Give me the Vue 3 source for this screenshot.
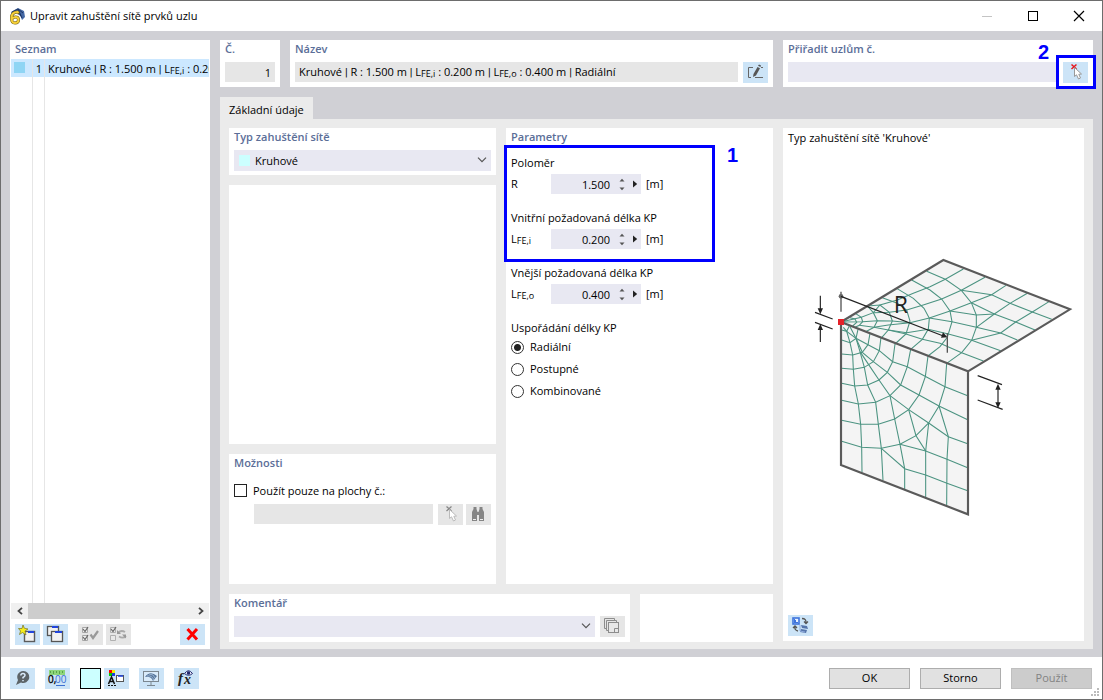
<script setup>
import { ref } from 'vue'

const arrangement = ref('radial')
const onlySurfaces = ref(false)
const refinement = ref('Kruhové')
const comment = ref('')
const nodes = ref('')

const lengths = ref([
  { id: 'r', label: 'Poloměr', sym: 'R', sub: '', value: '1.500' },
  { id: 'lfei', label: 'Vnitřní požadovaná délka KP', sym: 'L', sub: 'FE,i', value: '0.200' },
  { id: 'lfeo', label: 'Vnější požadovaná délka KP', sym: 'L', sub: 'FE,o', value: '0.400' },
])

const arrangements = [
  { id: 'radial', label: 'Radiální' },
  { id: 'gradual', label: 'Postupné' },
  { id: 'combined', label: 'Kombinované' },
]

const topMesh = [
  '150,203 165,207 170,217 158,228',
  '166,190 184,202 188,215 178,226 165,232',
  '202,168 220,188 232,212 222,232 197,245',
  '202,168 240,165 268,187 277,213 265,240 245,263',
  '247,143 292,160 320,180 330,213 318,252 285,282',
  '290,115 340,145 372,175 388,205 385,237 367,268 332,298',
  '335,90 390,120 425,147 450,183 456,215 442,262 420,290 384,318',
  '380,64 436,88 484,121 514,158 529,195 529,232 515,271 485,308 440,340',
  '123,216 184,202 220,188 240,165 292,150 340,130 390,110 436,88 490,57',
  '220,188 268,187 320,180 372,164 425,147 484,121 555,82',
  '123,216 188,215 232,212 277,213 330,218 388,204 450,183 514,158 575,134 618,106',
  '388,204 456,215 529,232 602,249 652,270',
  '178,226 222,232 265,225 330,218',
  '222,232 265,240 320,248 385,238 445,252 515,271 602,302',
  '265,240 318,252 367,268 420,280 485,308 550,333',
  '484,121 575,134 630,160 697,186 755,208',
  '514,158 583,192 647,216 705,240',
  '450,183 529,195 583,192',
  '529,232 583,192 630,160 682,130',
  '515,271 602,249 647,216 697,186 747,155',
]

const frontMesh = [
  '125,240 140,244 148,228',
  '125,270 150,278 168,265 174,238',
  '125,312 158,315 187,307 204,284 210,250',
  '125,355 160,358 193,352 220,335 238,302 243,262',
  '125,400 164,408 203,405 237,390 262,367 278,335 285,282',
  '125,451 175,462 227,457 270,437 302,405 322,350 332,298',
  '125,511 182,523 235,523 284,507 326,479 357,435 376,380 384,318',
  '125,574 185,592 244,595 300,583 348,557 386,519 417,468 435,410 440,340',
  '130,232 140,244 150,278 158,315 160,358 164,408 175,462 182,523 185,592 186,667',
  '140,244 168,265 180,305 193,352 203,405 227,457 235,523 244,595 249,691',
  '180,305 210,350 237,390 270,437 284,507 300,583 314,656 314,717',
  '168,265 187,307 220,335 262,367 302,405 357,435 417,468 503,509',
  '150,230 168,265 204,284 238,302 278,335 322,350 378,380 435,410 503,437',
  '270,437 326,479 386,519 445,560 503,581',
  '326,479 348,557 377,603 377,742',
  '386,519 377,603',
  '417,468 445,560 441,628 440,766',
  '300,583 377,603 441,628 503,653',
  '244,595 314,656 377,675 441,700 503,722',
]
</script>

<template>
  <main class="window">
    <header class="titlebar">
      <svg class="app-icon" width="17" height="17" viewBox="0 0 17 17" aria-hidden="true">
        <path d="M2 4L9 0L15 3L16 9L13 12L11 7L8 5L3 7Z" fill="#4468a5" />
        <path d="M3 4L9 1L14 5M6 3L12 8M9 1L13 10" stroke="#1d3564" fill="none" />
        <path d="M10 5.500L8.500 4Q2.500 4 2.500 10Q2.500 15 6 15Q9.500 15 9.500 11.800Q9.500 9 6.500 9Q4 9 3 11" stroke="#6b5a10" stroke-width="3" fill="none" />
        <path d="M9.500 5L8.500 4Q2.500 4 2.500 10Q2.500 15 6 15Q9.500 15 9.500 11.800Q9.500 9 6.500 9Q4 9 3 11" stroke="#f5cf38" stroke-width="2" fill="none" />
      </svg>
      <h1>Upravit zahuštění sítě prvků uzlu</h1>
      <div class="window-controls">
        <button aria-label="Minimalizovat" disabled><svg width="12" height="12" viewBox="0 0 12 12"><path d="M1 6.500H11" stroke="#c4c4c4" /></svg></button>
        <button aria-label="Maximalizovat"><svg width="12" height="12" viewBox="0 0 12 12"><rect x="1.500" y="1.500" width="9" height="9" fill="none" stroke="#000" /></svg></button>
        <button aria-label="Zavřít"><svg width="12" height="12" viewBox="0 0 12 12"><path d="M1 1L11 11M11 1L1 11" stroke="#000" stroke-width="1.200" /></svg></button>
      </div>
    </header>

    <div class="body">
      <section class="panel list-panel">
        <h2>Seznam</h2>
        <ul class="list" role="listbox" aria-label="Seznam">
          <li class="item" role="option" aria-selected="true">
            <span class="cell-color"><i class="swatch"></i></span>
            <span class="cell-no">1</span>
            <span class="cell-name">Kruhové <i class="bar">|</i> R : 1.500 m <i class="bar">|</i> L<sub>FE,i</sub> : 0.200</span>
          </li>
          <li class="rest" role="presentation"><span class="cell-color"></span><span class="cell-no"></span></li>
        </ul>
        <div class="scrollbar">
          <button aria-label="Posunout vlevo"><svg width="8" height="8" viewBox="0 0 8 8"><path d="M6 .8L2.500 4L6 7.200" fill="none" stroke="#444" stroke-width="1.800" /></svg></button>
          <div class="track"><div class="thumb"></div></div>
          <button aria-label="Posunout vpravo"><svg width="8" height="8" viewBox="0 0 8 8"><path d="M2 .8L5.500 4L2 7.200" fill="none" stroke="#444" stroke-width="1.800" /></svg></button>
        </div>
        <div class="list-tools">
          <button class="tool" aria-label="Nový">
            <svg width="25" height="21" viewBox="0 0 25 21">
              <rect x="9.500" y="7.500" width="10" height="10" fill="#f2f2f2" stroke="#5b5b5b" stroke-width="1.400" /><path d="M13 8H19" stroke="#2346dd" stroke-width="2" />
              <path d="M8 1L9.300 4.200L13 5L10 7L11 11L7.500 8.500L4.500 10.500L5.500 7L3.500 4.500L7 4.500Z" fill="#f6ee1c" stroke="#77731f" stroke-width=".7" />
            </svg>
          </button>
          <button class="tool" aria-label="Kopírovat">
            <svg width="25" height="21" viewBox="0 0 25 21">
              <rect x="4.500" y="2.500" width="11" height="9" fill="#f2f2f2" stroke="#555" stroke-width="1.300" /><path d="M9 3H15" stroke="#2346dd" stroke-width="2" />
              <rect x="8.500" y="7.500" width="11" height="10" fill="#f2f2f2" stroke="#555" stroke-width="1.300" /><path d="M12 8H19" stroke="#2346dd" stroke-width="2" />
            </svg>
          </button>
          <button class="tool off gap" aria-label="Vybrat vše" disabled>
            <svg width="25" height="21" viewBox="0 0 25 21">
              <path d="M4.500 3.500H9.500V8.500H4.500ZM4.500 11.500H9.500V16.500H4.500Z" fill="#eee" stroke="#a8a8a8" />
              <path d="M5 5L7 7.500L10 3M5 13L7 15.500L10 11" fill="none" stroke="#666" stroke-width="1.200" /><path d="M12.500 10.500L15 14L20 7" fill="none" stroke="#999" stroke-width="2.200" />
            </svg>
          </button>
          <button class="tool off" aria-label="Obrátit výběr" disabled>
            <svg width="25" height="21" viewBox="0 0 25 21">
              <path d="M4.500 3.500H9.500V8.500H4.500ZM4.500 11.500H9.500V16.500H4.500Z" fill="#e9e9e9" stroke="#b0b0b0" />
              <path d="M5 5L7 7.500L10 3" fill="none" stroke="#666" stroke-width="1.200" /><path d="M12 9Q15 5.500 19 8M20 12Q17 15 13 12.500" fill="none" stroke="#aaa" stroke-width="1.800" /><path d="M11 6V10H15ZM20 14.500V10.500H16Z" fill="#999" />
            </svg>
          </button>
          <button class="tool right" aria-label="Smazat">
            <svg width="25" height="21" viewBox="0 0 25 21"><path d="M7.500 5L17 15.500M17 5L7.500 15.500" stroke="#f00" stroke-width="3" /></svg>
          </button>
        </div>
      </section>

      <div class="main">
        <div class="top">
          <section class="panel">
            <h2>Č.</h2>
            <output class="field gray number">1</output>
          </section>
          <section class="panel">
            <h2>Název</h2>
            <div class="line">
              <output class="field gray grow">Kruhové <i class="bar">|</i> R : 1.500 m <i class="bar">|</i> L<sub>FE,i</sub> : 0.200 m <i class="bar">|</i> L<sub>FE,o</sub> : 0.400 m <i class="bar">|</i> Radiální</output>
              <button class="tool" aria-label="Upravit název">
                <svg width="25" height="21" viewBox="0 0 25 21"><path d="M10 5.500H5.500V15.500H8M12 15.500H20M18 5.500H20" fill="none" stroke="#666" /><path d="M14.500 5L17 6.200L13 13.500L10 15L10.500 12Z" fill="#555" /><path d="M15 3.800L16 2.500L18 3.500L17.500 5Z" fill="#555" /></svg>
              </button>
            </div>
          </section>
          <section class="panel">
            <h2><label for="nodes">Přiřadit uzlům č.</label></h2>
            <div class="line">
              <input id="nodes" v-model="nodes" class="field grow" type="text" />
              <div class="marked">
                <button class="tool" aria-label="Vybrat uzly">
                  <svg width="25" height="21" viewBox="0 0 25 21"><path d="M8.500 2.500L13.500 7M13.500 2.500L8.500 7" stroke="#e8161b" stroke-width="1.500" /><path d="M11.500 5.500V14.500L13.500 12.800L15.500 17L17.500 16L15.800 12.300L18.500 12Z" fill="#fff" stroke="#999" /></svg>
                </button>
                <div class="mark mark-two"></div>
                <b class="mark-label label-two">2</b>
              </div>
            </div>
          </section>
        </div>

        <nav class="tabs"><button class="tab">Základní údaje</button></nav>

        <div class="page">
          <div class="column">
            <section class="panel">
              <h2><label for="kind">Typ zahuštění sítě</label></h2>
              <div class="select">
                <i class="kind-swatch"></i>
                <select id="kind" v-model="refinement" class="with-swatch"><option>Kruhové</option></select>
                <svg class="chevron" width="10" height="6" viewBox="0 0 10 6"><path d="M1 .7L5 4.700L9 .7" fill="none" stroke="#555" stroke-width="1.200" /></svg>
              </div>
            </section>
            <section class="panel blank"></section>
            <section class="panel options">
              <h2>Možnosti</h2>
              <label class="check"><input v-model="onlySurfaces" type="checkbox" />Použít pouze na plochy č.:</label>
              <div class="line surfaces">
                <input class="field gray grow" type="text" aria-label="Plochy č." disabled />
                <div class="pair">
                  <button class="tool off" aria-label="Vybrat plochy" disabled>
                    <svg width="25" height="21" viewBox="0 0 25 21"><path d="M8.500 2.500L13.500 7M13.500 2.500L8.500 7" stroke="#888" stroke-width="1.300" /><path d="M11.500 5.500V14.500L13.500 12.800L15.500 17L17.500 16L15.800 12.300L18.500 12Z" fill="#fff" stroke="#bbb" /></svg>
                  </button>
                  <button class="tool off" aria-label="Najít plochy" disabled>
                    <svg width="25" height="21" viewBox="0 0 25 21"><path d="M6 15V8L7.500 5V3H10.500V5L11.500 8H12.500L13.500 5V3H16.500V5L18 8V15H13V11H11V15Z" fill="#858585" /><path d="M6 14.500H11V17H6ZM13 14.500H18V17H13Z" fill="#858585" /><path d="M7 15.500H10M14 15.500H17" stroke="#eee" /></svg>
                  </button>
                </div>
              </div>
            </section>
          </div>

          <section class="panel params">
            <h2>Parametry</h2>
            <div class="param-groups">
              <div v-for="p in lengths" :key="p.id" class="param">
                <div class="caption">{{ p.label }}</div>
                <div class="param-line">
                  <label :for="p.id">{{ p.sym }}<sub v-if="p.sub">{{ p.sub }}</sub></label>
                  <div class="spin">
                    <input :id="p.id" v-model="p.value" type="text" />
                    <div class="steps">
                      <button aria-label="Zvýšit"><svg width="6" height="4" viewBox="0 0 6 4"><path d="M.5 3.500L3 .7L5.500 3.500Z" fill="#555" /></svg></button>
                      <button aria-label="Snížit"><svg width="6" height="4" viewBox="0 0 6 4"><path d="M.5 .5L3 3.300L5.500 .5Z" fill="#555" /></svg></button>
                    </div>
                    <button class="more" aria-label="Další možnosti"><svg width="5" height="8" viewBox="0 0 5 8"><path d="M0 .5L4.200 4L0 7.500Z" fill="#222" /></svg></button>
                  </div>
                  <span>[m]</span>
                </div>
              </div>
            </div>
            <fieldset>
              <legend>Uspořádání délky KP</legend>
              <label v-for="a in arrangements" :key="a.id" class="radio"><input v-model="arrangement" type="radio" name="arrangement" :value="a.id" />{{ a.label }}</label>
            </fieldset>
            <div class="mark mark-one"></div>
            <b class="mark-label label-one">1</b>
          </section>

          <section class="panel preview">
            <p>Typ zahuštění sítě 'Kruhové'</p>
            <div class="drawing">
              <svg width="283" height="279" viewBox="-24 -27 849 837" role="img" aria-label="Kruhové zahuštění sítě">
                <path d="M123 216L430 30L810 178L504 364Z" fill="#f4f4f4" />
                <path d="M123 216L504 364V793L123 645Z" fill="#f4f4f4" />
                <g fill="none" stroke="#4b9381" stroke-width="3.200">
                  <polyline v-for="(m, i) in topMesh" :key="'t' + i" :points="m" />
                  <polyline v-for="(m, i) in frontMesh" :key="'f' + i" :points="m" />
                </g>
                <path d="M123 216L430 30L810 178L504 364ZM123 216V645L504 793V364" fill="none" stroke="#5a5a5a" stroke-width="6.500" />
                <rect x="114" y="207" width="18" height="18" fill="#e52129" />
                <path d="M123 125V185M442 250V308" stroke="#555" stroke-width="4" />
                <circle cx="123" cy="139" r="7" fill="#666" />
                <g stroke="#222" stroke-width="3.500" fill="none">
                  <path d="M123 139L430 258M45 187L98 207M45 217L98 237M61 137V180M61 276V230M533 377L606 404M533 450L608 478M594 410V467" />
                </g>
                <path d="M442 262L423 263L429 247ZM61 193L53 175H69ZM61 222L53 240H69ZM594 401L586 419H602ZM594 475L586 457H602Z" fill="#222" />
                <text x="281" y="190" font-size="69" fill="#222">R</text>
              </svg>
            </div>
            <button class="tool" aria-label="Přepnout náhled">
              <svg width="25" height="21" viewBox="0 0 25 21"><rect x="5" y="3" width="6" height="6" fill="#e7f0ff" stroke="#3d73dc" stroke-width="1.600" /><path d="M6 4V8H10V7H8V5H7V4Z" fill="#3d73dc" /><path d="M14 3.500Q18.500 3.500 18 8M16 6.500L18 8.500L20 6.500M7 11Q6 15 10 16M5 13L7 11L9 13" fill="none" stroke="#555" stroke-width="1.300" /><path d="M13 10L19 11L20 14L14 13ZM13 14L19 15L18 18L12 17Z" fill="#5575ab" /><path d="M12 10V16L17 17" stroke="#8eaadc" fill="none" /></svg>
            </button>
          </section>

          <div class="comment-row">
            <section class="panel">
              <h2><label for="comment">Komentář</label></h2>
              <div class="line">
                <div class="select grow">
                  <select id="comment" v-model="comment"><option></option></select>
                  <svg class="chevron" width="10" height="6" viewBox="0 0 10 6"><path d="M1 .7L5 4.700L9 .7" fill="none" stroke="#555" stroke-width="1.200" /></svg>
                </div>
                <button class="tool off" aria-label="Uložené komentáře" disabled>
                  <svg width="25" height="21" viewBox="0 0 25 21"><path d="M4.500 12.500V2.500H14.500V4M6.500 14.500V4.500H16.500V6" fill="none" stroke="#8d8d8d" /><path d="M4.500 12.500H6M6.500 14.500H8" stroke="#8d8d8d" /><rect x="8.500" y="6.500" width="10" height="10" fill="#e8e8e8" stroke="#8d8d8d" /><path d="M14.500 16V12.500H18" fill="none" stroke="#8d8d8d" /></svg>
                </button>
              </div>
            </section>
            <section class="panel"></section>
          </div>
        </div>
      </div>
    </div>

    <footer>
      <div class="foot-tools">
        <button class="tool" aria-label="Nápověda">
          <svg width="25" height="21" viewBox="0 0 25 21"><path d="M13 3A6 6 0 1 1 11 14.500L6 17L8 12A6 6 0 0 1 13 3Z" fill="#5d6468" /><path d="M10.800 7.500Q11 5.500 13 5.500Q15 5.500 15 7.300Q15 8.500 13 9.500V10.500M13 12V13.300" fill="none" stroke="#d9eafa" stroke-width="1.500" /></svg>
        </button>
        <button class="tool" aria-label="Jednotky a desetinná místa">
          <svg width="25" height="21" viewBox="0 0 25 21"><rect x="4" y="2" width="16" height="5" fill="#8ed67b" /><path d="M5.500 3V5M8.500 3V6M11.500 3V5M14.500 3V6M17.500 3V5" stroke="#5aa34b" /><text x="3" y="15" font-size="10" fill="#000" stroke="#000" stroke-width=".3">0,</text><text x="10" y="15" font-size="10" fill="#3a6fd2">00</text><path d="M11 17.500H20" stroke="#3a6fd2" /></svg>
        </button>
        <button class="color-button" aria-label="Barva"></button>
        <button class="tool tight" aria-label="Zobrazení">
          <svg width="25" height="21" viewBox="0 0 25 21"><path d="M5 2H8V5H5Z" fill="#f00" /><path d="M8 2H11V5H8Z" fill="#eded00" /><path d="M5 5H8V8H5Z" fill="#00ca00" /><path d="M8 5H11V8H8Z" fill="#1a3ce0" /><path d="M4.500 16L7.500 9L10.500 16M6 13.500H9" fill="none" stroke="#111" stroke-width="1.500" /><path d="M4 17.500H12" stroke="#111" stroke-dasharray="2 1" /><rect x="12.500" y="7.500" width="7" height="6" fill="#fff" stroke="#555" /><path d="M14 8H19" stroke="#2346dd" stroke-width="1.600" /></svg>
        </button>
        <button class="tool" aria-label="Náhled">
          <svg width="25" height="21" viewBox="0 0 25 21"><rect x="4.500" y="3.500" width="15" height="10" fill="#d9ebfa" stroke="#7b8790" /><path d="M12 14V17M8 17.500H16" stroke="#7b8790" /><path d="M6 9Q11 2 18 8L14 13Q12 8 6 9Z" fill="#56779d" /><path d="M8 8Q13 7 15 12M10 6Q15 6 16 10" stroke="#9bb3cf" fill="none" /></svg>
        </button>
        <button class="tool" aria-label="Vzorce">
          <svg width="25" height="21" viewBox="0 0 25 21"><text class="formula" x="4" y="15" font-size="15" fill="#222">f</text><text class="formula" x="10" y="16" font-size="14" fill="#222">x</text><path d="M10.500 5.500Q14.500 0 18.500 5.500Q14.500 9 10.500 5.500Z" fill="#e5eafb" stroke="#22266b" /><circle cx="14.500" cy="5" r="1.700" fill="#22266b" /></svg>
        </button>
      </div>
      <div class="actions">
        <button>OK</button>
        <button>Storno</button>
        <button disabled>Použít</button>
      </div>
      <svg class="grip" width="9" height="9" viewBox="0 0 9 9" aria-hidden="true"><path d="M6 0H8V2H6ZM3 3H5V5H3ZM6 3H8V5H6ZM0 6H2V8H0ZM3 6H5V8H3ZM6 6H8V8H6Z" fill="#bbb" /></svg>
    </footer>
  </main>
</template>

<style>
body { background: #fff; }
</style>

<style scoped>
* { box-sizing: border-box; }
.window {
  min-height: 100vh; display: flex; flex-direction: column; border: 1px solid #6d6d6d; background: #fff;
  font-family: "Open Sans", "Noto Sans", sans-serif; font-size: 11px; line-height: 16px; color: #000;
}
button, input, select { font: inherit; color: inherit; margin: 0; padding: 0; border: 0; border-radius: 0; background: none; }
svg { display: block; }
h1, h2, p, ul, fieldset { margin: 0; padding: 0; border: 0; }
sub { font-size: 9px; line-height: 1; vertical-align: -1px; }
.bar { font-family: Roboto, sans-serif; font-style: normal; }

.titlebar { height: 30px; display: flex; align-items: center; padding-left: 8px; gap: 4px; }
h1 { font-size: 11px; font-weight: 400; flex: 1; }
.window-controls { display: flex; }
.window-controls button { width: 46px; height: 30px; display: grid; place-items: center; }

.body { flex: 1; display: flex; gap: 10px; padding: 9px 9px 8px; background: #d0d0d5; }
.panel { background: #fff; padding: 1px 5px 5px; min-width: 0; }
h2 { font-size: 11px; font-weight: 600; color: #5b6e98; line-height: 16px; margin-bottom: 5px; }

.list-panel { width: 200px; display: flex; flex-direction: column; padding: 1px 1px 4px; }
.list-panel h2 { padding-left: 4px; margin-bottom: 2px; }
.list { flex: 1; list-style: none; display: flex; flex-direction: column; }
.item, .rest { display: flex; overflow: hidden; }
.item { height: 18px; line-height: 19px; background: #cce8ff; white-space: nowrap; }
.rest { flex: 1; }
.cell-color { width: 22px; padding: 3px; border-right: 1px solid #e6e6e6; flex: none; }
.cell-no { width: 12px; border-right: 1px solid #e6e6e6; text-align: right; padding-right: 2px; flex: none; }
.cell-name { padding-left: 3px; overflow: hidden; }
.swatch { display: block; width: 11px; height: 11px; background: #8fd5f4; }
.scrollbar { height: 16px; display: flex; background: #f0f0f0; }
.scrollbar button { width: 17px; display: grid; place-items: center; }
.track { flex: 1; }
.thumb { width: 56%; height: 100%; background: #cdcdcd; }
.list-tools { display: flex; gap: 3px; padding: 5px 4px 0; }
.tool { width: 25px; height: 21px; background: #cce4f7; flex: none; }
.tool.off { background: #e6e6e6; }
.gap { margin-left: 7px; }
.right { margin-left: auto; }

.main { flex: 1; min-width: 0; display: flex; flex-direction: column; }
.top { display: grid; grid-template-columns: 60px 1fr 310px; gap: 10px; }
.line { display: flex; gap: 5px; }
.field { display: block; height: 20px; line-height: 20px; padding: 0 4px; background: #e8e8f2; min-width: 0; white-space: nowrap; overflow: hidden; }
.gray { background: #e6e6e6; }
.grow { flex: 1; }
.number { text-align: right; line-height: 22px; }
.top .panel { height: 47px; }

.tabs { display: flex; margin-top: 10px; }
.tab { height: 22px; padding: 4px 9px 0; background: #ebebeb; }
.page {
  flex: 1; display: grid; grid-template-columns: 1fr 1fr 301px; grid-template-rows: 1fr 47px; gap: 10px;
  padding: 9px 9px 8px; background: #ebebeb;
}
.column { display: flex; flex-direction: column; gap: 10px; min-width: 0; }
.column .panel { padding-bottom: 4px; }
.blank { flex: 1; }
.options { height: 130px; }
.select { position: relative; height: 21px; background: #e8e8f2; }
select { display: block; appearance: none; width: 100%; height: 21px; padding: 0 20px 0 5px; }
.with-swatch { padding-left: 21px; }
.kind-swatch { position: absolute; left: 5px; top: 5px; width: 11px; height: 11px; background: #ccffff; pointer-events: none; }
.chevron { position: absolute; right: 4px; top: 7px; pointer-events: none; }
.check { display: flex; align-items: center; gap: 6px; height: 15px; margin-top: 12px; }
.check input { appearance: none; width: 13px; height: 13px; border: 1px solid #222; background: #fff; }
.surfaces { margin: 6px 0 0 20px; }
.pair { display: flex; gap: 3px; }

.params { position: relative; }
.param-groups { display: grid; gap: 16px; padding-top: 5px; }
.param-line { display: flex; align-items: center; height: 20px; margin-top: 3px; gap: 5px; }
.param-line label { width: 35px; }
.spin { width: 90px; height: 20px; display: flex; align-items: center; background: #e8e8f2; }
.spin input { width: 59px; height: 20px; text-align: right; }
.steps { width: 23px; display: grid; justify-content: center; gap: 5px; }
.steps button, .more { display: block; }
fieldset { margin-top: 16px; min-width: 0; }
legend { padding: 0; display: block; }
.radio { display: flex; align-items: center; gap: 6px; height: 22px; }
.radio input { appearance: none; width: 13px; height: 13px; border: 1px solid #333; border-radius: 50%; background: #fff; }
.radio input:checked { background: radial-gradient(circle, #222 3px, #fff 4px); }

.preview { grid-column: 3; grid-row: 1 / 3; display: flex; flex-direction: column; }
.preview p { padding-top: 1px; }
.drawing { flex: 1; display: grid; place-items: center; }
.comment-row { grid-column: 1 / 3; display: grid; grid-template-columns: 1fr 133px; gap: 10px; }

.marked { position: relative; }
.mark { position: absolute; border: 3px solid #0000fe; pointer-events: none; }
.mark-one { left: -2px; top: 17px; width: 211px; height: 117px; }
.mark-two { left: -7px; top: -7px; width: 40px; height: 34px; }
.mark-label { position: absolute; font-family: "Liberation Sans", sans-serif; font-size: 20px; line-height: 20px; color: #0000fe; }
.label-one { left: 221px; top: 17px; }
.label-two { left: -25px; top: -20px; }

footer { position: relative; height: 42px; display: flex; justify-content: space-between; align-items: center; padding: 0 10px 0 9px; }
.foot-tools { display: flex; gap: 10px; }
.color-button { width: 21px; height: 21px; border: 1px solid #000; background: #ccffff; }
.tight { margin-left: -7px; }
.actions { display: flex; gap: 10px; }
.actions button { width: 81px; height: 21px; border: 1px solid #adadad; background: #e1e1e1; }
.actions button:disabled { background: #ccc; border-color: #bfbfbf; color: #838383; }
.grip { position: absolute; right: 2px; bottom: 2px; }
.formula { font-family: "Liberation Serif", serif; font-style: italic; font-weight: 700; }
</style>
